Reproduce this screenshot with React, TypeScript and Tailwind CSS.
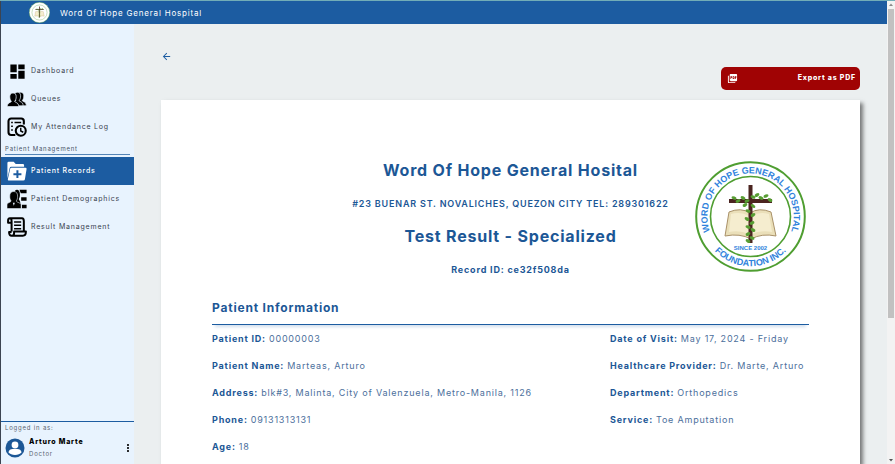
import type { ReactNode } from "react";
import { MdArrowBack, MdDashboard, MdMoreVert, MdPictureAsPdf } from "react-icons/md";

type IconProps = { className?: string };

function QueueIcon({ className }: IconProps) {
  const person =
    "M0 17c0-3 4-3.600 5-5-1.500-1.600-2-3.500-2-6 0-3 1.500-4.500 4-4.500S11 3 11 6c0 2.500-.5 4.400-2 6 1 1.400 5 2 5 5v1.500H0z";
  return (
    <svg viewBox="0 0 24 20" className={className} aria-hidden="true">
      <g fill="black" stroke="#e8f3fe" strokeWidth="0.900">
        <path d={person} transform="translate(9.500 0)" />
        <path d={person} transform="translate(5.500 0)" />
        <path d={person} transform="translate(0 1)" />
      </g>
    </svg>
  );
}

function AttendanceIcon({ className }: IconProps) {
  return (
    <svg viewBox="0 0 24 24" className={className} fill="none" stroke="black" strokeWidth="2.500" aria-hidden="true">
      <path d="M10 21.500H5A3.200 3.200 0 0 1 1.800 18.300V5A3.200 3.200 0 0 1 5 1.800h12A3.200 3.200 0 0 1 20.200 5v4" />
      <path d="M5 6.500h2M5 11h2M5 15.500h2M9 6.500h8" strokeWidth="1.800" />
      <circle cx="16.500" cy="16.500" r="6" />
      <path d="M16.500 12.800v4l3 1.500" strokeWidth="1.700" />
    </svg>
  );
}

function FolderIcon({ className }: IconProps) {
  return (
    <svg viewBox="0 0 24 24" className={className} aria-hidden="true">
      <path fill="white" d="M.5 21V2.500Q.5 1 2 1h6l2.500 2.500H19q1.500 0 1.500 1.500v2H5Q3.600 7 3.200 8.500z" />
      <path fill="white" d="M5.500 8H22q1.700 0 1.500 1.500l-2 12.500q-.2 1.500-2 1.500H2q-1.200 0-1-1.500L3.700 9.500Q4 8 5.500 8z" />
      <path stroke="#1c5ca1" strokeWidth="2.400" d="M12.500 11v9.500M7.700 15.800h9.600" />
    </svg>
  );
}

function DemographicsIcon({ className }: IconProps) {
  return (
    <svg viewBox="0 0 24 24" className={className} aria-hidden="true">
      <path d="M15 1h8.500v4H16.500zM17 10h6.500v4H17zM18 19h5.500v4H18z" />
      <path d="M8.500 7c0-4 1.500-6 3.500-6s3.500 2 3.500 6c0 2-.5 3.500-1.300 5 .3 2 1.800 2 1.800 5v2H9z" />
      <path
        stroke="#e8f3fe"
        strokeWidth="0.700"
        d="M0 23.500V19c0-2.600 4-2.500 5-4.500C3.600 13 3.300 11 3.300 8.500c0-3.600 1.600-5.500 4.700-5.500s4.700 1.900 4.700 5.500c0 2.500-.3 4.500-1.700 6 1 2 6 1.900 6 4.500v4.500z"
      />
      <path fill="#e8f3fe" d="m7 16.500 1.200 3.500 1.200-3.500z" />
    </svg>
  );
}

function ScrollIcon({ className }: IconProps) {
  return (
    <svg
      viewBox="0 0 24 24"
      className={className}
      fill="none"
      stroke="black"
      strokeWidth="2.400"
      strokeLinejoin="round"
      aria-hidden="true"
    >
      <path d="M5.500 17.500V5c0-2-.5-3.500-2-3.500S1.300 2.500 1.300 4.500V7h4.200M3.500 1.500h14.500c1.500 0 2.200 1.200 2.200 3.500v12" />
      <path d="M20.200 17.500H8.500v2c0 2-1 3-3 3s-3-1.500-3-4.500h3M5.500 22.500h13.500c2.500 0 3.700-1.500 3.700-5h-2.500" />
      <path d="M8.500 6h8.500M8.500 10h8.500M8.500 14h8.500" strokeWidth="1.800" />
    </svg>
  );
}

function AvatarIcon({ className }: IconProps) {
  return (
    <svg viewBox="0 0 20 20" className={className} aria-hidden="true">
      <circle cx="10" cy="10" r="9.500" fill="#1c5796" />
      <circle cx="10" cy="7" r="3.400" fill="white" />
      <path fill="white" d="M3.500 14.500c0-2.500 2.300-3.600 4-3.600h5c1.700 0 4 1.100 4 3.600-1.500 1.700-3.700 2.400-6.500 2.400s-5-.7-6.500-2.400z" />
    </svg>
  );
}

const leaves = [
  [39, 37, 20], [43, 40, -25], [48, 37, 30], [52, 40, -20], [58, 36, 20], [62, 34, -30], [66, 37, 25],
  [71, 35, -20], [75, 39, 30], [50, 44, -30], [58, 45, 35], [53, 50, 20], [58, 54, -30], [52, 58, 30],
  [57, 62, -25], [53, 66, 20], [58, 69, 30], [53, 73, -30], [57, 77, 20], [53, 80, 30],
];

function Emblem({ className, lettering = true }: IconProps & { lettering?: boolean }) {
  return (
    <svg viewBox="0 0 111 111" className={className} role="img" aria-label="Word of Hope General Hospital Foundation Inc.">
      <defs>
        <path id="emblem-top" d="M16.900 75A43.200 43.200 0 1 1 94.100 75" />
        <path id="emblem-bottom" d="M9 73A49.700 49.700 0 0 0 102 73" />
      </defs>
      <circle cx="55.500" cy="55.500" r="54.300" fill="white" stroke="#4f9e31" strokeWidth="2" />
      <circle cx="55.500" cy="55.500" r="40" fill="white" stroke="#4f9e31" strokeWidth="1.600" />
      <path
        fill="#eadfb9"
        stroke="#a99168"
        strokeWidth="1"
        d="M34 51q12-5 21 1 9-6 21-1l5 24q-14-3-25 3-11-6-26-3z"
      />
      <path fill="#f5edcf" d="M36 53q10-3 18 2v18q-9-4-20-2zM74 53q-10-3-17 2v18q9-4 20-2z" />
      <path fill="#4b2420" d="M53.500 24h4v58h-4zM34 38h43v4H34z" />
      <g fill="#579d32">
        {leaves.map(([x, y, turn]) => (
          <ellipse key={`${x}-${y}`} cx={x} cy={y} rx="2.600" ry="1.600" transform={`rotate(${turn} ${x} ${y})`} />
        ))}
      </g>
      {lettering && (
        <g fill="#2f82dc" className="font-['Liberation_Sans',sans-serif] font-bold tracking-normal" textAnchor="middle">
          <text fontSize="9">
            <textPath href="#emblem-top" startOffset="50%">WORD OF HOPE GENERAL HOSPITAL</textPath>
          </text>
          <text fontSize="9">
            <textPath href="#emblem-bottom" startOffset="50%">FOUNDATION INC.</textPath>
          </text>
          <text x="55.500" y="89" fontSize="6">SINCE 2002</text>
        </g>
      )}
    </svg>
  );
}

function NavItem({ icon, label, active = false }: { icon: ReactNode; label: string; active?: boolean }) {
  return (
    <a
      href="#"
      aria-current={active ? "page" : undefined}
      className={`flex h-7 items-center gap-1 pl-[6px] text-[7px] whitespace-nowrap ${
        active ? "bg-[#1c5ca1] font-medium text-white" : "text-[#39424e]"
      }`}
    >
      <span className="flex w-5 shrink-0 justify-center">{icon}</span>
      {label}
    </a>
  );
}

function Field({ label, value }: { label: string; value: string }) {
  return (
    <div className="flex h-[27px] items-center gap-[3px] whitespace-nowrap">
      <dt className="font-bold">{label}:</dt>
      <dd className="text-[#4c6f9c]">{value}</dd>
    </div>
  );
}

export default function App() {
  return (
    <div className="flex h-screen overflow-hidden border-t border-[#72adb7] bg-[#ebeff0] font-['Inter','Liberation_Sans',sans-serif] tracking-wider">
      <div className="flex min-w-0 flex-1 flex-col border-l border-[#3c4451]">
        <header className="flex h-[23px] shrink-0 items-center gap-[10px] bg-[#1c5ca1] pl-7 text-[8px] text-white">
          <Emblem className="size-[21px]" lettering={false} />
          <span>Word Of Hope General Hospital</span>
        </header>

        <div className="flex min-h-0 flex-1">
          <aside className="flex w-[133px] shrink-0 flex-col bg-[#e8f3fe] pt-[33px]">
            <nav>
              <NavItem icon={<MdDashboard className="size-[19px] text-black" />} label="Dashboard" />
              <NavItem icon={<QueueIcon className="h-4 w-5" />} label="Queues" />
              <NavItem icon={<AttendanceIcon className="size-5" />} label="My Attendance Log" />
              <h2 className="mx-1 mb-[2px] h-[14px] border-b border-[#5384b6] text-[6px] leading-4 text-[#4a5568]">
                Patient Management
              </h2>
              <NavItem icon={<FolderIcon className="size-5" />} label="Patient Records" active />
              <NavItem icon={<DemographicsIcon className="size-5" />} label="Patient Demographics" />
              <NavItem icon={<ScrollIcon className="size-5" />} label="Result Management" />
            </nav>
            <div className="mt-auto border-t border-[#1c5ca1] pb-1 pl-1">
              <p className="text-[6px] leading-3 text-[#5b6470]">Logged in as:</p>
              <div className="mt-[2px] flex items-center">
                <AvatarIcon className="size-5" />
                <div className="ml-1 flex-1">
                  <p className="text-[7px] leading-3 font-extrabold text-black">Arturo Marte</p>
                  <p className="text-[6px] leading-3 text-[#5b6470]">Doctor</p>
                </div>
                <button type="button" aria-label="Account menu">
                  <MdMoreVert className="size-3 text-black" />
                </button>
              </div>
            </div>
          </aside>

          <main className="flex min-w-0 flex-1 flex-col px-[27px]">
            <div className="flex h-[43px] items-start pt-6">
              <button type="button" aria-label="Back" className="flex h-4 items-center">
                <MdArrowBack className="size-[11px] text-[#1c5ca1]" />
              </button>
            </div>
            <button
              type="button"
              className="flex h-[23px] w-[139px] shrink-0 items-center justify-between self-end rounded-[5px] bg-[#a00304] pr-1 pl-[6px] text-[7px] font-extrabold text-white"
            >
              <MdPictureAsPdf className="size-[11px]" />
              Export as PDF
            </button>

            <article className="mt-[10px] flex-1 bg-white px-[51px] pt-[54px] text-[#1c5796] shadow-[3px_3px_4px_#00000080]">
              <header className="grid grid-cols-[1fr_auto_1fr] items-start text-center font-bold whitespace-nowrap">
                <div className="col-start-2 *:h-[33px] *:leading-[33px]">
                  <h1 className="text-base">Word Of Hope General Hosital</h1>
                  <p className="text-[9px] font-semibold">#23 BUENAR ST. NOVALICHES, QUEZON CITY TEL: 289301622</p>
                  <h2 className="text-base">Test Result - Specialized</h2>
                  <p className="text-[9px]">Record ID: ce32f508da</p>
                </div>
                <Emblem className="mt-[7px] mr-[3px] size-[111px] justify-self-end" />
              </header>

              <section className="mt-[6px]">
                <h3 className="h-[33px] border-b border-[#1c5ca1] text-xs leading-8 font-bold shadow-[0_5px_3px_-3px_#1c5ca133]">
                  Patient Information
                </h3>
                <div className="grid grid-cols-[2fr_1fr] text-[9px]">
                  <dl>
                    <Field label="Patient ID" value="00000003" />
                    <Field label="Patient Name" value="Marteas, Arturo" />
                    <Field label="Address" value="blk#3, Malinta, City of Valenzuela, Metro-Manila, 1126" />
                    <Field label="Phone" value="09131313131" />
                    <Field label="Age" value="18" />
                  </dl>
                  <dl>
                    <Field label="Date of Visit" value="May 17, 2024 - Friday" />
                    <Field label="Healthcare Provider" value="Dr. Marte, Arturo" />
                    <Field label="Department" value="Orthopedics" />
                    <Field label="Service" value="Toe Amputation" />
                  </dl>
                </div>
              </section>
            </article>
          </main>
        </div>
      </div>

      <div className="flex w-2 shrink-0 flex-col items-center bg-[#f3f3f3]" aria-hidden="true">
        <svg viewBox="0 0 8 8" className="size-2 shrink-0 fill-[#8a8a8a]">
          <path d="m4 2.500 2 2.500H2z" />
        </svg>
        <div className="h-2/3 w-[6px] bg-[#c1c1c1]" />
        <svg viewBox="0 0 8 8" className="mt-auto size-2 shrink-0 fill-[#555]">
          <path d="m4 5.500 2-2.500H2z" />
        </svg>
      </div>
    </div>
  );
}
